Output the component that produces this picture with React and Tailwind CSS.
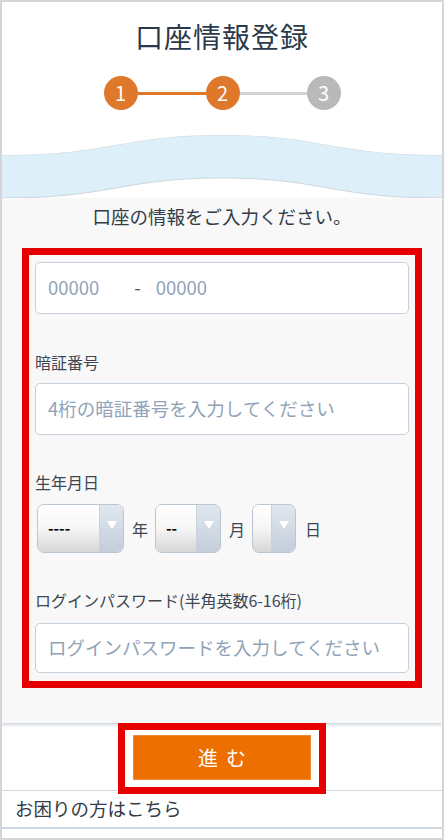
import React from 'react';

const font = { fontFamily: '"Noto Sans CJK JP", "Noto Sans", sans-serif' };

const Step = ({ n, active }) => (
  <div
    className={`w-[34px] h-[34px] rounded-full flex items-center justify-center text-white text-[20px] leading-none ${
      active ? 'bg-[#df782a]' : 'bg-[#b9b9b9]'
    }`}
  >
    {n}
  </div>
);

const Select = ({ width, value }) => (
  <div
    className="flex h-[49px] rounded-[7px] border border-[#bac6d2] overflow-hidden"
    style={{ width }}
  >
    <div className="flex-1 flex items-center pl-[10px] bg-gradient-to-b from-white via-[#f6f6f6] to-[#d6d6d6] text-[15px] font-bold text-black">
      {value}
    </div>
    <div className="w-[24px] bg-gradient-to-b from-[#e1e7ee] to-[#c3cedb] border-l border-[#c9d3de] flex justify-center pt-[16px]">
      <svg width="10" height="8" viewBox="0 0 10 8">
        <path d="M0 0 L10 0 L5 8 Z" fill="#ffffff" />
      </svg>
    </div>
  </div>
);

const Input = ({ children, h = 'h-[52px]' }) => (
  <div className={`${h} bg-white border border-[#c5d1dd] rounded-[5px] flex items-center px-[12px] text-[18.5px] text-[#91a3b8]`}>
    {children}
  </div>
);

export default function App() {
  return (
    <div className="w-[444px] h-[840px] border-2 border-[#d5d5d5] bg-white flex flex-col overflow-hidden" style={font}>
      {/* header */}
      <div className="h-[133px] flex flex-col items-center">
        <h1 className="pt-[17px] text-[28px] leading-[34px] text-[#2b3a4b] tracking-[1px]">口座情報登録</h1>
        <div className="mt-[23px] flex items-center">
          <Step n="1" active />
          <div className="w-[68px] h-[3px] bg-[#df782a]" />
          <Step n="2" active />
          <div className="w-[67px] h-[3px] bg-[#d2d2d2]" />
          <Step n="3" />
        </div>
      </div>

      {/* wave */}
      <svg width="440" height="63" viewBox="0 0 440 63" className="block">
        <rect x="0" y="0" width="440" height="63" fill="#f8f8f8" />
        <path d="M0 20 C 110 20 120 0 220 0 C 320 0 330 20 440 20 L440 63 L0 63 Z" fill="#ddf0fa" />
        <path d="M0 20 C 110 20 120 0 220 0 C 320 0 330 20 440 20" fill="none" stroke="#cdd6de" strokeWidth="1" />
        <path d="M0 0 L440 0 L440 20 C 330 20 320 0 220 0 C 120 0 110 20 0 20 Z" fill="#ffffff" />
        <path d="M0 63 C 110 63 120 43 220 43 C 320 43 330 63 440 63 Z" fill="#ffffff" />
        <path d="M0 63 C 110 63 120 43 220 43 C 320 43 330 63 440 63" fill="none" stroke="#cdd6de" strokeWidth="1" />
      </svg>

      {/* body */}
      <div className="bg-[#f8f8f8] pt-[6px] pb-[35px] shadow-[0_2px_3px_rgba(150,165,185,0.45)] relative z-0">
        <p className="text-center text-[18.5px] leading-[24px] text-[#333c48]">口座の情報をご入力ください。</p>

        <div className="mt-[20px] ml-[20px] w-[400px] border-[7px] border-[#e60000] px-[6px] pt-[7px] pb-[8px]">
          <Input>
            <span>00000</span>
            <span className="ml-[35px] text-[#555]">-</span>
            <span className="ml-[15px]">00000</span>
          </Input>

          <div className="mt-[38px] text-[16px] leading-[20px] text-[#3d4651]">暗証番号</div>
          <div className="mt-[11px]">
            <Input>4桁の暗証番号を入力してください</Input>
          </div>

          <div className="mt-[37px] text-[16px] leading-[20px] text-[#3d4651]">生年月日</div>
          <div className="mt-[12px] ml-[2px] flex items-center text-[16px] text-[#3d4651]">
            <Select width={87} value="----" />
            <span className="ml-[8px] mr-[7px]">年</span>
            <Select width={66} value="--" />
            <span className="ml-[8px] mr-[7px]">月</span>
            <Select width={44} value="" />
            <span className="ml-[9px]">日</span>
          </div>

          <div className="mt-[37px] text-[16px] leading-[20px] text-[#3d4651]">ログインパスワード(半角英数6-16桁)</div>
          <div className="mt-[13px]">
            <Input h="h-[50px]">ログインパスワードを入力してください</Input>
          </div>
        </div>
      </div>

      {/* button */}
      <div className="flex justify-center relative z-10">
        <div className="w-[208px] border-[7px] border-[#e60000] bg-white px-[8px] pt-[5px] pb-[7px]">
          <button className="w-full h-[45px] bg-[#ec6f00] border border-[#f08a3a] text-white text-[20px] tracking-[8px] pl-[8px]">
            進む
          </button>
        </div>
      </div>

      {/* help */}
      <div className="-mt-[4px] h-[39px] border-t border-b-2 border-[#cfd8e1] flex items-center px-[13px] text-[18.5px] text-[#333c48]">
        お困りの方はこちら
      </div>
    </div>
  );
}
